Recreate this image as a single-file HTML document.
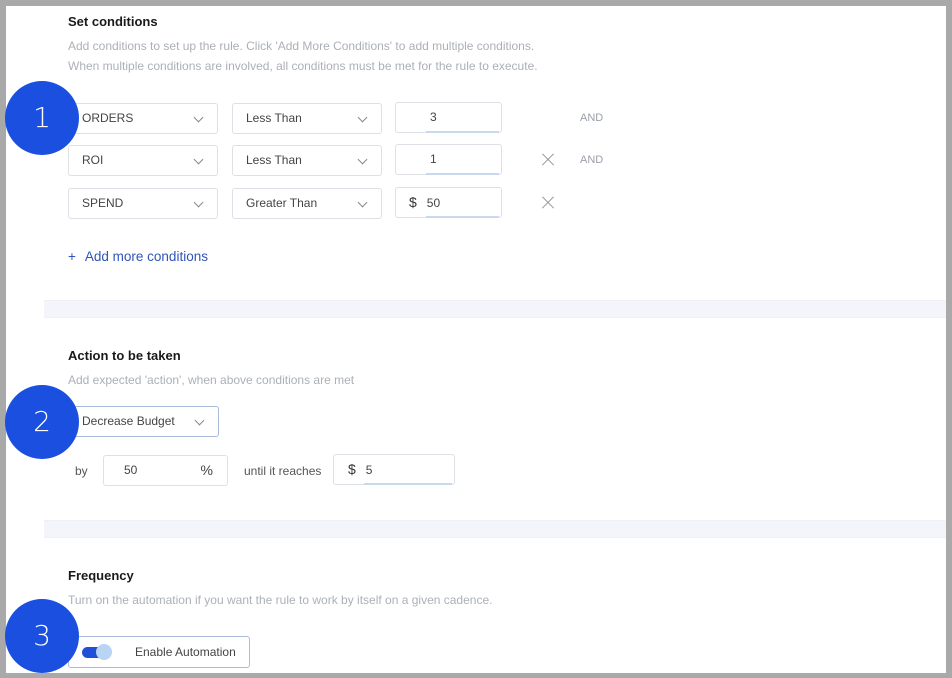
<!DOCTYPE html>
<html><head><meta charset="utf-8"><style>
*{margin:0;padding:0;box-sizing:border-box}
body{width:952px;height:678px;background:#a9a9a9;position:relative;overflow:hidden;font-family:"Liberation Sans",sans-serif}
#p{position:absolute;left:6px;top:6px;width:940px;height:667px;background:#fff}
.a{position:absolute}
.h{font-size:13px;font-weight:bold;color:#1a1a1a;left:68px}
.s{font-size:12px;color:#abb0b8;left:68px;line-height:20px}
.box{position:absolute;border:1px solid #dde1e6;border-radius:3px;background:#fff;font-size:12px;color:#444;height:31px;line-height:29px;padding-left:13px}
.box .chev{position:absolute;right:15px;top:10px;width:7px;height:7px;border-right:1px solid #888;border-bottom:1px solid #888;transform:rotate(45deg)}
.inp::after{content:"";position:absolute;left:30px;right:2px;bottom:-1px;height:2px;background:#c9d8ec}
.x{position:absolute;width:14px;height:14px;left:541px}
.x::before,.x::after{content:"";position:absolute;left:-1px;top:6px;width:16px;height:1.3px;background:#999;transform:rotate(45deg)}
.x::after{transform:rotate(-45deg)}
.and{position:absolute;left:580px;font-size:11px;color:#9aa0a8}
.band{position:absolute;left:44px;right:6px;height:18px;background:#f3f5fa;border-top:1px solid #eef0f5;border-bottom:1px solid #eef0f5}
.c{position:absolute;width:74px;height:74px;border-radius:50%;background:#1a4fe0;color:#fff;font-size:28px;text-align:center;line-height:74px;left:5px;font-family:"DejaVu Sans",sans-serif;font-weight:300}
</style></head><body>
<div id="p"></div>
<div class="a h" style="top:14px">Set conditions</div>
<div class="a s" style="top:36px">Add conditions to set up the rule. Click 'Add More Conditions' to add multiple conditions.<br>When multiple conditions are involved, all conditions must be met for the rule to execute.</div>

<div class="box" style="left:68px;top:103px;width:150px">ORDERS<span class="chev"></span></div>
<div class="box" style="left:232px;top:103px;width:150px">Less Than<span class="chev"></span></div>
<div class="box inp" style="left:395px;top:102px;width:107px;padding-left:34px">3</div>
<div class="and" style="top:112px">AND</div>

<div class="box" style="left:68px;top:145px;width:150px">ROI<span class="chev"></span></div>
<div class="box" style="left:232px;top:145px;width:150px">Less Than<span class="chev"></span></div>
<div class="box inp" style="left:395px;top:144px;width:107px;padding-left:34px">1</div>
<div class="x" style="top:153px"></div>
<div class="and" style="top:154px">AND</div>

<div class="box" style="left:68px;top:188px;width:150px">SPEND<span class="chev"></span></div>
<div class="box" style="left:232px;top:188px;width:150px">Greater Than<span class="chev"></span></div>
<div class="box inp" style="left:395px;top:187px;width:107px;padding-left:13px"><span style="font-size:14px;color:#333">$</span>&nbsp;&nbsp;&nbsp;50</div>
<div class="x" style="top:196px"></div>

<div class="a" style="left:68px;top:249px;font-size:13.5px;color:#2f55b8"><span style="margin-right:9px">+</span>Add more conditions</div>

<div class="band" style="top:300px"></div>

<div class="a h" style="top:348px">Action to be taken</div>
<div class="a s" style="top:370px">Add expected 'action', when above conditions are met</div>
<div class="box" style="left:68px;top:406px;width:151px;border-color:#a9bcdc">Decrease Budget<span class="chev"></span></div>
<div class="a" style="left:75px;top:464px;font-size:12px;color:#555">by</div>
<div class="box" style="left:103px;top:455px;width:125px;padding-left:20px">50<span style="position:absolute;right:14px;font-size:14px;color:#444">%</span></div>
<div class="a" style="left:244px;top:464px;font-size:12px;color:#555">until it reaches</div>
<div class="box inp" style="left:333px;top:454px;width:122px;padding-left:14px"><span style="font-size:14px;color:#333">$</span>&nbsp;&nbsp;&nbsp;5</div>

<div class="band" style="top:520px"></div>

<div class="a h" style="top:568px">Frequency</div>
<div class="a s" style="top:590px">Turn on the automation if you want the rule to work by itself on a given cadence.</div>
<div class="box" style="left:68px;top:636px;width:182px;height:32px;border-color:#a9bcdc">
<span style="position:absolute;left:13px;top:10px;width:24px;height:11px;border-radius:6px;background:#2050d8"></span>
<span style="position:absolute;left:27px;top:7px;width:16px;height:16px;border-radius:50%;background:#b9d4f5"></span>
<span style="position:absolute;left:66px;top:1px;color:#444">Enable Automation</span></div>

<div class="c" style="top:81px">1</div>
<div class="c" style="top:385px">2</div>
<div class="c" style="top:599px">3</div>
</body></html>
